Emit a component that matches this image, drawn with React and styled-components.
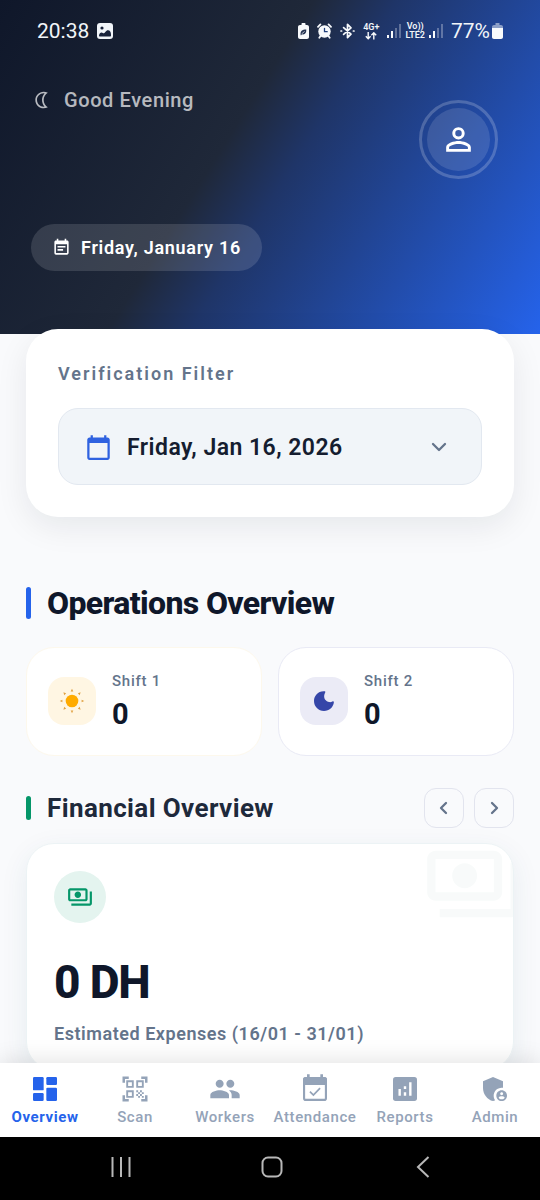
import React from 'react';
import styled, { createGlobalStyle } from 'styled-components';
import {
  MdOutlineNightlight,
  MdPersonOutline,
  MdCalendarToday,
  MdEventNote,
  MdOutlinePayments,
  MdQrCodeScanner,
  MdPeople,
  MdAdminPanelSettings,
} from 'react-icons/md';

const GlobalStyle = createGlobalStyle`
  *, *::before, *::after { box-sizing: border-box; }
  body {
    margin: 0;
    background: #f8fafc;
    font-family: Roboto, "Liberation Sans", sans-serif;
    color: #0f172a;
  }
  button { font: inherit; color: inherit; cursor: pointer; }
  h1, h2, p { margin: 0; }
  svg { display: block; flex: none; }
`;

const Screen = styled.div`
  display: flex;
  flex-direction: column;
  height: 100vh;
  overflow: hidden;
`;

const Content = styled.main`
  flex: 1;
  min-height: 0;
  overflow: hidden;
  background: #f9fafc;
`;

/* Header */

const Header = styled.header`
  display: flex;
  flex-direction: column;
  padding-bottom: 63px;
  color: #fff;
  background: linear-gradient(122deg, #0f172a 0%, #1f2839 42%, #1f3568 53%, #2563eb 100%);
`;

const StatusBar = styled.div`
  display: flex;
  align-items: center;
  justify-content: space-between;
  height: 62px;
  padding: 0 37px;
  color: #f1f5f9;
`;

const StatusGroup = styled.div`
  display: flex;
  align-items: center;
  gap: ${(p) => p.$gap}px;
`;

const StatusText = styled.span`
  font-size: 21px;
  line-height: 24px;
`;

const TinyLabel = styled.span`
  display: flex;
  flex-direction: column;
  align-items: center;
  font-size: 9px;
  line-height: 9px;
  font-weight: 600;
`;

const Hero = styled.div`
  display: flex;
  align-items: flex-start;
  justify-content: space-between;
  padding: 26px 42px 0 32px;
`;

const Greeting = styled.p`
  display: flex;
  align-items: center;
  gap: 12px;
  font-size: 20px;
  line-height: 24px;
  font-weight: 500;
  letter-spacing: 0.03em;
  color: rgba(255, 255, 255, 0.7);
`;

const ProfileButton = styled.button`
  display: flex;
  width: 79px;
  height: 79px;
  margin-top: 12px;
  padding: 5px;
  border: 3px solid rgba(255, 255, 255, 0.2);
  border-radius: 50%;
  background: none;
`;

const ProfileFace = styled.span`
  display: flex;
  flex: 1;
  align-self: stretch;
  align-items: center;
  justify-content: center;
  border-radius: 50%;
  color: #fff;
  background: rgba(255, 255, 255, 0.12);
`;

const DatePill = styled.div`
  display: flex;
  align-items: center;
  align-self: flex-start;
  gap: 10px;
  height: 47px;
  margin: 45px 0 0 31px;
  padding: 0 21px;
  border-radius: 24px;
  background: rgba(255, 255, 255, 0.13);
  font-size: 18px;
  font-weight: 600;
  letter-spacing: 0.04em;
`;

/* Filter */

const FilterCard = styled.section`
  position: relative;
  display: flex;
  flex-direction: column;
  gap: 21px;
  margin: -5px 26px 0;
  padding: 32px;
  border-radius: 32px;
  background: #fff;
  box-shadow: 0 10px 32px rgba(15, 23, 42, 0.08);
`;

const FilterLabel = styled.span`
  font-size: 18px;
  line-height: 26px;
  font-weight: 600;
  letter-spacing: 2px;
  color: #64748b;
`;

const DatePicker = styled.button`
  display: flex;
  align-items: center;
  gap: 15px;
  height: 77px;
  padding: 1px 33px 0 26px;
  border: 1px solid #e2e8f0;
  border-radius: 20px;
  background: #f1f5f9;
  color: #151d30;
  font-size: 23px;
  font-weight: 600;
  letter-spacing: 0.02em;
  text-align: left;
`;

const PickerValue = styled.span`
  flex: 1;
`;

/* Sections */

const Section = styled.section`
  margin: ${(p) => p.$top}px 26px 0;
`;

const SectionHead = styled.div`
  display: flex;
  align-items: center;
  min-height: 32px;
  gap: 10px;
`;

const Accent = styled.span`
  width: 5px;
  height: ${(p) => p.$height}px;
  margin-right: 6px;
  border-radius: 3px;
  background: ${(p) => p.$color};
`;

const MainTitle = styled.h1`
  font-size: 32px;
  line-height: 32px;
  font-weight: 800;
  letter-spacing: -0.02em;
`;

const SubTitle = styled.h2`
  flex: 1;
  font-size: 26px;
  line-height: 32px;
  font-weight: 700;
  letter-spacing: 0.015em;
  color: #1e293b;
`;

const PagerButton = styled.button`
  display: flex;
  align-items: center;
  justify-content: center;
  width: 40px;
  height: 40px;
  padding: 0;
  border: 1px solid #e2e4ee;
  border-radius: 12px;
  background: transparent;
`;

const ShiftGrid = styled.div`
  display: grid;
  grid-template-columns: 1fr 1fr;
  gap: 16px;
  margin-top: 28px;
`;

const ShiftCard = styled.article`
  display: flex;
  align-items: center;
  gap: 16px;
  height: 109px;
  padding: 0 21px 2px;
  border: 1px solid ${(p) => p.$border};
  border-radius: 28px;
  background: #fff;
`;

const ShiftTile = styled.span`
  display: flex;
  align-items: center;
  justify-content: center;
  width: 48px;
  height: 48px;
  border-radius: 16px;
  background: ${(p) => p.$color};
`;

const ShiftLabel = styled.p`
  font-size: 15px;
  line-height: 20px;
  font-weight: 500;
  letter-spacing: 0.05em;
  color: #64748b;
`;

const ShiftValue = styled.p`
  margin-top: 6px;
  font-size: 29px;
  line-height: 34px;
  font-weight: 700;
`;

const CardShadow = styled.div`
  border-radius: 28px;
  box-shadow: 0 8px 28px rgba(5, 80, 100, 0.08);
`;

const ExpenseCard = styled.article`
  position: relative;
  height: 227px;
  margin-top: 15px;
  padding: 27px;
  border: 1px solid #ecf3f5;
  border-radius: 28px;
  overflow: hidden;
  background: #fff;
`;

const Watermark = styled.span`
  position: absolute;
  top: -10px;
  right: -10px;
  color: #1d7058;
  opacity: 0.03;
`;

const ExpenseIcon = styled.span`
  display: flex;
  align-items: center;
  justify-content: center;
  width: 52px;
  height: 52px;
  border-radius: 50%;
  color: #059669;
  background: #e4f4ef;
`;

const Amount = styled.p`
  margin-top: 32px;
  font-size: 46px;
  line-height: 54px;
  font-weight: 800;
  letter-spacing: -0.025em;
`;

const AmountLabel = styled.p`
  margin-top: 13px;
  font-size: 18px;
  line-height: 24px;
  font-weight: 600;
  letter-spacing: 0.03em;
  color: #64748b;
`;

/* Bottom bars */

const TabBar = styled.nav`
  position: relative;
  display: grid;
  grid-template-columns: repeat(6, 1fr);
  height: 74px;
  background: #fff;
  box-shadow: 0 -4px 20px rgba(0, 0, 0, 0.1);
`;

const Tab = styled.a`
  display: flex;
  flex-direction: column;
  align-items: center;
  padding-top: 10px;
  font-size: 15px;
  line-height: 20px;
  font-weight: ${(p) => (p.$active ? 700 : 500)};
  letter-spacing: 0.04em;
  text-decoration: none;
  color: ${(p) => (p.$active ? '#2563eb' : '#94a3b8')};
  white-space: nowrap;
`;

const TabIcon = styled.span`
  display: flex;
  align-items: center;
  height: 32px;
  margin-bottom: 2px;
`;

const SystemBar = styled.div`
  display: flex;
  align-items: center;
  justify-content: space-around;
  height: 63px;
  padding: 0 42px 0 45px;
  background: #000;
`;

const SystemButton = styled.button`
  display: flex;
  align-items: center;
  justify-content: center;
  width: 48px;
  height: 48px;
  padding: 0 0 4px;
  border: 0;
  background: none;
`;

const PictureIcon = () => (
  <svg width="16" height="16" viewBox="0 0 16 16">
    <rect width="16" height="16" rx="3" fill="#f1f5f9" />
    <circle cx="5" cy="5" r="1.6" fill="#18223a" />
    <path d="M2 12.6c.2-2 1.400-3.200 2.600-3.200 1 0 1.500.8 2.300.8 1.100 0 1.900-2.900 4.100-2.900 1.900 0 3 1.900 3 4.300v1c0 .6-.4 1-1 1H3c-.6 0-1-.4-1-1z" fill="#18223a" />
  </svg>
);

const PowerSaveIcon = () => (
  <svg width="11" height="16" viewBox="0 0 11 16">
    <path d="M3.500 1c0-.6.400-1 1-1h2c.6 0 1 .4 1 1v1H9c1.100 0 2 .9 2 2v10c0 1.100-.9 2-2 2H2c-1.100 0-2-.9-2-2V4c0-1.100.9-2 2-2h1.500z" fill="#f8fafc" />
    <path d="M2.600 11.700c-.4-3.400 1.400-5.200 5.700-5.200.3 3.400-1.500 5.600-4.200 4.700L2.900 12.500z" fill="#243352" />
    <path d="M3.600 10.900 6.600 8.400" stroke="#f8fafc" strokeWidth="0.7" />
  </svg>
);

const AlarmIcon = () => (
  <svg width="15" height="16" viewBox="0 0 15 16" fill="none" stroke="#f8fafc" strokeLinecap="round">
    <circle cx="7.500" cy="8.500" r="6.200" fill="#f8fafc" stroke="none" />
    <path d="M1 3.800 3.400 1.400M14 3.800 11.600 1.400" strokeWidth="1.800" />
    <path d="m3.500 13-1.200 1.800M11.500 13l1.200 1.800" strokeWidth="1.800" />
    <path d="M7.500 5.300v3.400h2.700" stroke="#21407c" strokeWidth="1.300" />
  </svg>
);

const BluetoothIcon = () => (
  <svg width="15" height="16" viewBox="0 0 15 16" fill="none" stroke="#f8fafc" strokeWidth="1.700" strokeLinejoin="round" strokeLinecap="round">
    <path d="m3.600 4.600 7.400 6.600-3.500 3.500V1.300L11 4.800l-7.400 6.600" />
    <path d="M1 8h.6M13.400 8h.6" strokeWidth="1.700" />
  </svg>
);

const DataArrows = () => (
  <svg width="12" height="8" viewBox="0 0 12 8" fill="none" stroke="#f8fafc" strokeWidth="1.400">
    <path d="M3.200 0v6.500M.8 4.300l2.400 2.500 2.400-2.500M8.800 7.500V1M6.400 3.300 8.800.8l2.400 2.500" />
  </svg>
);

const SignalIcon = () => (
  <svg width="14" height="16" viewBox="0 0 14 16" fill="#f8fafc">
    <rect x="0" y="12" width="2" height="3" />
    <rect x="4" y="8" width="2" height="7" />
    <rect x="8" y="5" width="2" height="10" opacity="0.3" />
    <rect x="12" y="1" width="2" height="14" opacity="0.3" />
  </svg>
);

const BatteryIcon = () => (
  <svg width="11" height="16" viewBox="0 0 11 16" fill="#f8fafc">
    <path d="M3.500 0h4v2H9c1.100 0 2 .7 2 2v2H0V4c0-1.300.9-2 2-2h1.500z" opacity="0.5" />
    <path d="M0 5h11v9c0 1.200-.8 2-2 2H2c-1.200 0-2-.8-2-2z" />
  </svg>
);

const Chevron = ({ d }) => (
  <svg width="18" height="18" viewBox="0 0 18 18" fill="none" stroke="#64748b" strokeWidth="2.300" strokeLinecap="round" strokeLinejoin="round">
    <path d={d} />
  </svg>
);

const SunIcon = () => (
  <svg width="26" height="26" viewBox="-13 -13 26 26">
    <circle r="6.300" fill="#ffab00" />
    {[0, 45, 90, 135, 180, 225, 270, 315].map((a) => (
      <path key={a} d="M0-12.200 1.300-9.600H-1.300z" fill="#e0a040" transform={`rotate(${a})`} />
    ))}
  </svg>
);

const MoonIcon = () => (
  <svg width="22" height="22" viewBox="0 0 22 22">
    <path d="M10.500 1.200C5 1.400 1 5.600 1 11c0 5.600 4.400 10 10 10 5.200 0 9.400-3.800 9.900-9-.1-.9-.9-1-1.500-.6-1.100.7-2.100.9-3.200.7-3.300-.5-5.400-3.200-5-6.500.1-1.100.5-2.100 1-3 .4-.8.1-1.400-.7-1.400z" fill="#3546a8" />
  </svg>
);

const DashboardIcon = () => (
  <svg width="32" height="32" viewBox="0 0 24 24" fill="currentColor">
    <rect x="3" y="3" width="8" height="10" rx="0.900" />
    <rect x="3" y="15" width="8" height="6" rx="0.900" />
    <rect x="13" y="3" width="8" height="6" rx="0.900" />
    <rect x="13" y="11" width="8" height="10" rx="0.900" />
  </svg>
);

const AttendanceIcon = () => (
  <svg width="32" height="32" viewBox="0 0 24 24" fill="none" stroke="currentColor">
    <path d="M5 3h14a2 2 0 0 1 2 2v4H3V5a2 2 0 0 1 2-2z" fill="currentColor" stroke="none" />
    <rect x="3.800" y="3.800" width="16.400" height="16.400" rx="1.300" strokeWidth="1.600" />
    <path d="M7 1v3M17 1v3" strokeWidth="2" />
    <path d="m8.200 14 2.600 2.500 5-5.200" strokeWidth="1.300" />
  </svg>
);

const ReportsIcon = () => (
  <svg width="32" height="32" viewBox="0 0 24 24">
    <rect x="3" y="3" width="18" height="18" rx="2" fill="currentColor" />
    <path d="M8 12v5M12 14.500v2.500M12 10v2M16 7v10" stroke="#fff" strokeWidth="1.800" />
  </svg>
);

const tabs = [
  { label: 'Overview', icon: <DashboardIcon />, active: true },
  { label: 'Scan', icon: <MdQrCodeScanner size={30} /> },
  { label: 'Workers', icon: <MdPeople size={32} /> },
  { label: 'Attendance', icon: <AttendanceIcon /> },
  { label: 'Reports', icon: <ReportsIcon /> },
  { label: 'Admin', icon: <MdAdminPanelSettings size={32} /> },
];

export default function App() {
  return (
    <Screen>
      <GlobalStyle />
      <Content>
        <Header>
          <StatusBar>
            <StatusGroup $gap={8}>
              <StatusText>20:38</StatusText>
              <PictureIcon />
            </StatusGroup>
            <StatusGroup $gap={8}>
              <PowerSaveIcon />
              <AlarmIcon />
              <BluetoothIcon />
              <TinyLabel>
                4G+
                <DataArrows />
              </TinyLabel>
              <StatusGroup $gap={4}>
                <SignalIcon />
                <TinyLabel>
                  <span>Vo))</span>
                  <span>LTE2</span>
                </TinyLabel>
                <SignalIcon />
              </StatusGroup>
              <StatusGroup $gap={2}>
                <StatusText>77%</StatusText>
                <BatteryIcon />
              </StatusGroup>
            </StatusGroup>
          </StatusBar>
          <Hero>
            <Greeting>
              <MdOutlineNightlight size={20} />
              Good Evening
            </Greeting>
            <ProfileButton type="button" aria-label="Profile">
              <ProfileFace>
                <MdPersonOutline size={37} />
              </ProfileFace>
            </ProfileButton>
          </Hero>
          <DatePill>
            <MdEventNote size={19} />
            Friday, January 16
          </DatePill>
        </Header>

        <FilterCard>
          <FilterLabel id="filter-label">Verification Filter</FilterLabel>
          <DatePicker type="button" aria-labelledby="filter-label filter-value">
            <MdCalendarToday size={27} color="#2f62e0" />
            <PickerValue id="filter-value">Friday, Jan 16, 2026</PickerValue>
            <Chevron d="M3 6l6 6 6-6" />
          </DatePicker>
        </FilterCard>

        <Section $top={70}>
          <SectionHead>
            <Accent $height={32} $color="#2563eb" />
            <MainTitle>Operations Overview</MainTitle>
          </SectionHead>
          <ShiftGrid>
            <ShiftCard $border="#fdf8ec">
              <ShiftTile $color="#fff6e3">
                <SunIcon />
              </ShiftTile>
              <div>
                <ShiftLabel>Shift 1</ShiftLabel>
                <ShiftValue>0</ShiftValue>
              </div>
            </ShiftCard>
            <ShiftCard $border="#e9eaf5">
              <ShiftTile $color="#ebebf6">
                <MoonIcon />
              </ShiftTile>
              <div>
                <ShiftLabel>Shift 2</ShiftLabel>
                <ShiftValue>0</ShiftValue>
              </div>
            </ShiftCard>
          </ShiftGrid>
        </Section>

        <Section $top={32}>
          <SectionHead>
            <Accent $height={24} $color="#059669" />
            <SubTitle>Financial Overview</SubTitle>
            <PagerButton type="button" aria-label="Previous">
              <Chevron d="M11 4L6 9l5 5" />
            </PagerButton>
            <PagerButton type="button" aria-label="Next">
              <Chevron d="M7 4l5 5-5 5" />
            </PagerButton>
          </SectionHead>
          <CardShadow>
            <ExpenseCard>
              <Watermark>
                <MdOutlinePayments size={100} />
              </Watermark>
              <ExpenseIcon>
                <MdOutlinePayments size={26} />
              </ExpenseIcon>
              <Amount>0 DH</Amount>
              <AmountLabel>Estimated Expenses (16/01 - 31/01)</AmountLabel>
            </ExpenseCard>
          </CardShadow>
        </Section>
      </Content>

      <TabBar>
        {tabs.map((t) => (
          <Tab key={t.label} href="#" $active={t.active}>
            <TabIcon>{t.icon}</TabIcon>
            {t.label}
          </Tab>
        ))}
      </TabBar>
      <SystemBar>
        <SystemButton type="button" aria-label="Recent apps">
          <svg width="20" height="22" viewBox="0 0 20 22" stroke="#b8b8b8" strokeWidth="2">
            <path d="M1.500 1v20M10 1v20M18.500 1v20" />
          </svg>
        </SystemButton>
        <SystemButton type="button" aria-label="Home">
          <svg width="22" height="22" viewBox="0 0 22 22" fill="none" stroke="#b8b8b8" strokeWidth="2">
            <rect x="1.500" y="1.500" width="19" height="19" rx="5.500" />
          </svg>
        </SystemButton>
        <SystemButton type="button" aria-label="Back">
          <svg width="14" height="22" viewBox="0 0 14 22" fill="none" stroke="#b8b8b8" strokeWidth="2">
            <path d="M12.500 1 2 11l10.500 10" />
          </svg>
        </SystemButton>
      </SystemBar>
    </Screen>
  );
}
